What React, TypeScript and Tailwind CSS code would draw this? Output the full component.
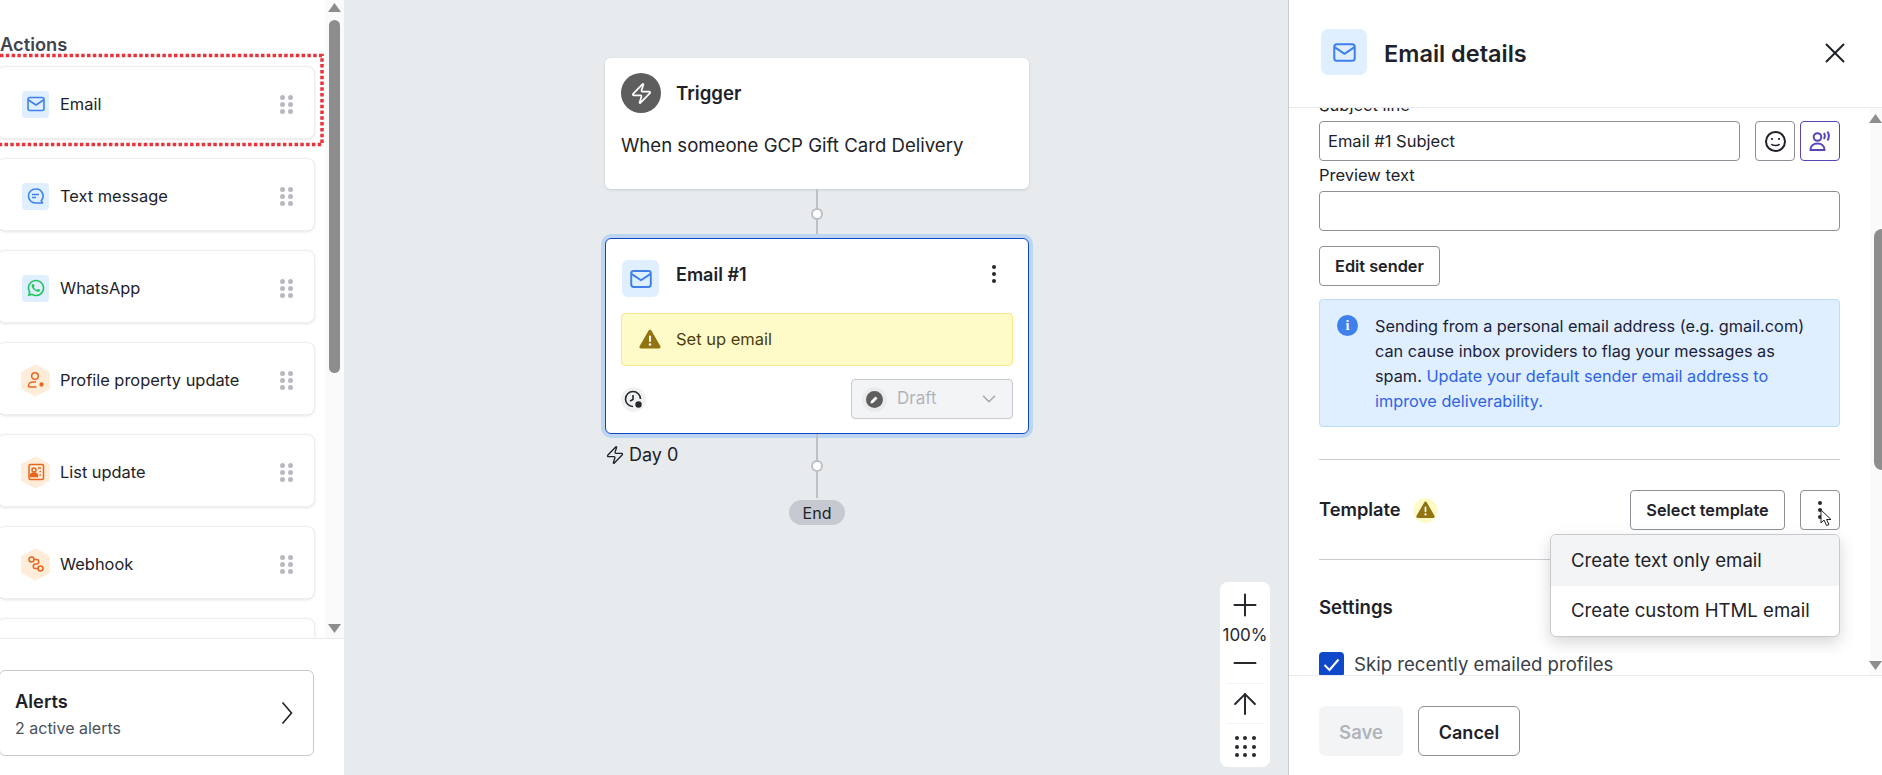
import { ChevronDown, Minus, Plus, ArrowUp, X, Zap } from 'lucide-react';
import { RiWhatsappLine } from 'react-icons/ri';

function MailIcon({ size = 18 }: { size?: number }) {
  return (
    <svg width={size} height={size} viewBox="0 0 18 18" fill="none" stroke="#3f80ea" strokeWidth="1.6">
      <rect x="1" y="2.5" width="16" height="13" rx="2" />
      <path d="M1.5 5 9 10l7.500-5" strokeLinejoin="round" />
    </svg>
  );
}

function Hexagon({ children }: { children: React.ReactNode }) {
  return (
    <div className="relative -ml-[2px] mr-[-2px] flex h-[33px] w-[31px] items-center justify-center">
      <svg className="absolute inset-0" width="31" height="33" viewBox="0 0 31 33">
        <polygon points="15.5,2 28.500,9 28.500,24 15.5,31 2.500,24 2.500,9" fill="#ffecd9" stroke="#ffecd9" strokeWidth="3" strokeLinejoin="round" />
      </svg>
      <svg className="relative" width="18" height="18" viewBox="0 0 18 18" fill="none" stroke="#e5671f" strokeWidth="1.5">
        {children}
      </svg>
    </div>
  );
}

function SquareIcon({ children }: { children: React.ReactNode }) {
  return <div className="flex h-[27px] w-[27px] items-center justify-center rounded-[4px] bg-[#dfefff]">{children}</div>;
}

function Grip() {
  return (
    <div className="grid grid-cols-2 gap-x-[3px] gap-y-[2px]">
      {[0, 1, 2, 3, 4, 5].map((i) => (
        <span key={i} className="h-[5px] w-[5px] rounded-full bg-[#b6bac0]" />
      ))}
    </div>
  );
}

const actions = [
  { label: 'Email', icon: <SquareIcon><MailIcon /></SquareIcon> },
  {
    label: 'Text message',
    icon: (
      <SquareIcon>
        <svg width="19" height="19" viewBox="0 0 19 19" fill="none" stroke="#3f80ea" strokeWidth="1.6">
          <path d="M9.500 2a7 7 0 1 0 0 14h7l-1.300-2.300A7 7 0 0 0 9.500 2Z" strokeLinejoin="round" />
          <path d="M6 7.500h7M6 10.500h4" />
        </svg>
      </SquareIcon>
    ),
  },
  {
    label: 'WhatsApp',
    icon: <SquareIcon><RiWhatsappLine size={20} color="#22c55e" /></SquareIcon>,
  },
  {
    label: 'Profile property update',
    icon: (
      <Hexagon>
        <circle cx="8" cy="5" r="3.300" />
        <path d="M1.500 16v-1.500c0-2 2-3.500 4.500-3.500h3" />
        <path d="M1.500 16h8" />
        <circle cx="14.500" cy="13.500" r="1.400" fill="#e5671f" />
      </Hexagon>
    ),
  },
  {
    label: 'List update',
    icon: (
      <Hexagon>
        <rect x="2" y="1.500" width="14.500" height="15" rx="1.500" />
        <circle cx="7" cy="7" r="2" />
        <path d="M3.500 13c0-2 1.500-3 3.500-3s3.500 1 3.500 3v.5h-7Z" fill="#e5671f" />
        <path d="M11 5h3M12.500 8.500H14M12.500 12H14" />
      </Hexagon>
    ),
  },
  {
    label: 'Webhook',
    icon: (
      <Hexagon>
        <circle cx="4.500" cy="4.500" r="2.500" />
        <circle cx="13.500" cy="13.500" r="2.500" />
        <path d="M7 4.500h2.500a2.200 2.200 0 0 1 0 4.500h-1a2.200 2.200 0 0 0 0 4.500H11" />
      </Hexagon>
    ),
  },
];

function ActionCard({ label, icon }: { label?: string; icon?: React.ReactNode }) {
  return (
    <div className="flex h-[73px] w-[318px] shrink-0 items-center rounded-[8px] border border-[#eceef0] bg-white pl-[24px] pr-[21px] pt-[3px] shadow-[0_1px_3px_rgba(0,0,0,0.1)]">
      {icon}
      <span className="ml-[11px] flex-1 text-[16.4px] text-[#1e2228]">{label}</span>
      {label && <Grip />}
    </div>
  );
}

function ScrollArrow({ down }: { down?: boolean }) {
  return (
    <svg width="13" height="9" viewBox="0 0 13 9" className="shrink-0">
      <polygon points={down ? '0,0 13,0 6.500,9' : '6.500,0 13,9 0,9'} fill="#8d8d8d" />
    </svg>
  );
}

function Sidebar() {
  return (
    <aside className="relative flex h-full w-[345px] shrink-0 flex-col border-r border-[#e6e8ea] bg-white">
      <div className="flex h-[639px] shrink-0 border-b border-[#e8eaec]">
        <div className="w-[325px] overflow-hidden">
          <h2 className="pt-[33px] text-[18.3px] leading-[22px] font-semibold text-[#3f454c]">Actions</h2>
          <div className="-ml-[3px] mt-[11px] flex flex-col gap-[19px]">
            {actions.map((a) => (
              <ActionCard key={a.label} label={a.label} icon={a.icon} />
            ))}
            <ActionCard />
          </div>
        </div>
        <div className="flex flex-1 flex-col items-center justify-between bg-[#fafafa] pb-[5px] pt-[3px] pr-px">
          <ScrollArrow />
          <div className="absolute left-[329px] top-[20px] h-[353px] w-[11px] rounded-full bg-[#8d8d8d]" />
          <ScrollArrow down />
        </div>
      </div>
      <div className="-ml-px mt-[31px] flex h-[86px] w-[315px] items-center justify-between rounded-[6px] border border-[#c6c9ce] pl-[15px] pr-[20px]">
        <div>
          <div className="pt-[1px] text-[18.3px] leading-[26px] font-semibold text-[#1e2228]">Alerts</div>
          <div className="mt-[2px] text-[16px] leading-[24px] text-[#4b5159]">2 active alerts</div>
        </div>
        <svg width="12" height="24" viewBox="0 0 12 24" fill="none" stroke="#1e2228" strokeWidth="1.6">
          <path d="M1.500 1.500 10.500 12l-9 10.500" />
        </svg>
      </div>
      {/* dotted highlight round the first card */}
      <svg className="absolute left-0 top-[53px]" width="325" height="95" viewBox="0 0 325 95" fill="none">
        <path d="M0 2.500H322V91.500H0" stroke="#e8343c" strokeWidth="3.500" strokeDasharray="3.500 2.300" />
      </svg>
    </aside>
  );
}

function Connector({ height }: { height: number }) {
  return (
    <div className="relative flex w-full shrink-0 justify-center" style={{ height }}>
      <div className="h-full w-[2px] bg-[#bcc0c5]" />
      <div className="absolute left-1/2 top-1/2 h-[12px] w-[12px] -translate-x-1/2 -translate-y-1/2 rounded-full border-2 border-[#bcc0c5] bg-white" />
    </div>
  );
}

function ZoomControls() {
  return (
    <div className="absolute bottom-[8px] right-[18px] flex h-[185px] w-[50px] flex-col items-center rounded-[8px] bg-white pt-[10px] text-[#26282c]">
      <div className="flex h-[26px] items-center justify-center">
        <Plus size={36} strokeWidth={1.35} className="shrink-0" />
      </div>
      <div className="mt-[7px] text-[17px] leading-[20px]">100%</div>
      <div className="mt-[5px] flex h-[26px] items-center justify-center">
        <Minus size={36} strokeWidth={1.35} className="shrink-0" />
      </div>
      <div className="mt-[7px] h-px w-[36px] bg-[#f3f4f5]" />
      <div className="mt-[7px] flex h-[26px] items-center justify-center">
        <ArrowUp size={34} strokeWidth={1.4} className="shrink-0" />
      </div>
      <div className="mt-[6px] h-px w-[36px] bg-[#f3f4f5]" />
      <div className="mt-[12px] grid grid-cols-3 gap-x-[4.500px] gap-y-[4.500px]">
        {[0, 1, 2, 3, 4, 5, 6, 7, 8].map((i) => (
          <span key={i} className="h-[4px] w-[4px] rounded-full bg-[#26282c]" />
        ))}
      </div>
    </div>
  );
}

function Canvas() {
  return (
    <main className="relative flex h-full flex-1 flex-col items-center bg-[#e8ebee] pl-px pt-[58px]">
      <div className="h-[131px] w-[424px] shrink-0 rounded-[6px] bg-white px-[16px] pt-[15px] shadow-[0_1px_3px_rgba(0,0,0,0.12)]">
        <div className="flex items-center gap-[15px]">
          <div className="flex h-[40px] w-[40px] items-center justify-center rounded-full bg-[#5e5e5e]">
            <Zap size={23} color="white" strokeWidth={1.8} />
          </div>
          <span className="pt-[1px] text-[18.6px] font-semibold text-[#1e2228]">Trigger</span>
        </div>
        <p className="mt-[19px] text-[18.6px] leading-[26px] text-[#1e2228]">When someone GCP Gift Card Delivery</p>
      </div>
      <Connector height={49} />
      <div className="relative h-[196px] w-[424px] shrink-0 rounded-[6px] border border-[#0f49c0] bg-white px-[15px] pt-[21px] shadow-[0_0_0_4px_#bcd6f2]">
        <div className="flex h-[37px] items-center">
          <div className="ml-[1px] flex h-[37px] w-[37px] items-center justify-center rounded-[6px] bg-[#dfefff]">
            <MailIcon size={22} />
          </div>
          <span className="ml-[17px] flex-1 -translate-y-[4px] text-[18px] font-semibold text-[#1e2228]">Email #1</span>
          <div className="mr-[17px] flex -translate-y-[5px] flex-col gap-[3px]">
            <span className="h-[4px] w-[4px] rounded-full bg-[#26282c]" />
            <span className="h-[4px] w-[4px] rounded-full bg-[#26282c]" />
            <span className="h-[4px] w-[4px] rounded-full bg-[#26282c]" />
          </div>
        </div>
        <div className="mt-[16px] flex h-[53px] items-center rounded-[4px] border border-[#fce58a] bg-[#fffbc8] pl-[17px]">
          <WarnIcon />
          <span className="ml-[15px] text-[16.5px] text-[#4c3d0c]">Set up email</span>
        </div>
        <div className="mt-[13px] flex items-center justify-between">
          <div className="mt-[1px] flex h-[25px] w-[25px] items-center justify-center rounded-full bg-[#f0f1f3]">
            <svg width="19" height="19" viewBox="0 0 19 19" fill="none" stroke="#26282c" strokeWidth="1.6">
              <path d="M9 16.500A7.500 7.500 0 1 1 16.500 9" />
              <path d="M9 5v4.500l-3 1.500" />
              <circle cx="14.500" cy="14.500" r="3.200" fill="#26282c" stroke="none" />
            </svg>
          </div>
          <div className="flex h-[40px] w-[162px] items-center rounded-[4px] border border-[#c6c9ce] bg-[#f2f4f6] pl-[10px] pr-[12px]">
            <div className="flex h-[25px] w-[25px] items-center justify-center rounded-full bg-[#e9ebed]">
              <div className="flex h-[17px] w-[17px] items-center justify-center rounded-full bg-[#5e5e5e]">
                <svg width="9" height="9" viewBox="0 0 9 9"><path d="M0.500 8.500 1 6l4.500-4.500 2 2L3 8Z" fill="white" /></svg>
              </div>
            </div>
            <span className="ml-[10px] flex-1 text-[17px] text-[#b0b4ba]">Draft</span>
            <ChevronDown size={22} strokeWidth={1.7} className="text-[#a6aab0]" />
          </div>
        </div>
        <div className="absolute -left-[1px] top-[204px] flex items-center gap-[4px] text-[18px] leading-[24px] text-[#1e2228]">
          <Zap size={20} strokeWidth={1.6} />
          Day 0
        </div>
      </div>
      <Connector height={64} />
      <div className="mt-[2px] flex h-[25px] w-[56px] items-center justify-center rounded-full bg-[#c6c9cf] text-[16px] text-[#1e2228]">End</div>
      <ZoomControls />
    </main>
  );
}

function WarnIcon({ size = 22 }: { size?: number }) {
  return (
    <svg width={size} height={size * 0.91} viewBox="0 0 22 20">
      <path d="M9.600 1.500a1.600 1.600 0 0 1 2.800 0l9 15.700a1.600 1.600 0 0 1-1.400 2.400H2a1.600 1.600 0 0 1-1.400-2.400Z" fill="#927211" />
      <rect x="10" y="6.500" width="2" height="6.500" rx="1" fill="white" />
      <circle cx="11" cy="15.500" r="1.300" fill="white" />
    </svg>
  );
}

const outlineBtn = 'flex h-[40px] items-center justify-center rounded-[4px] border border-[#8d9096] bg-white text-[16.3px] font-semibold text-[#1e2228]';

function DetailsPanel() {
  return (
    <section className="flex h-full w-[594px] shrink-0 flex-col border-l border-[#c9cdd2] bg-white">
      <header className="flex h-[108px] shrink-0 items-start border-b border-[#e8eaec] pl-[32px] pr-[30px] pt-[29px]">
        <div className="flex h-[46px] w-[46px] items-center justify-center rounded-[7px] bg-[#dfefff]">
          <MailIcon size={23} />
        </div>
        <h1 className="ml-[17px] flex-1 text-[23.5px] leading-[50px] font-semibold text-[#1e2228]">Email details</h1>
        <X size={34} strokeWidth={1.4} className="mt-[7px] text-[#1e2228]" />
      </header>
      <div className="relative flex min-h-0 flex-1">
        <div className="min-w-0 flex-1 overflow-hidden pl-[30px] pr-[30px]">
          <div className="-mt-[13px] h-[20px] text-[16.5px] leading-[20px] text-[#1e2228]">Subject line</div>
          <div className="mt-[6px] flex gap-[5px]">
            <div className="mr-[10px] flex h-[40px] flex-1 items-center rounded-[4px] border border-[#8d9096] pl-[8px] text-[16.5px] text-[#1e2228]">Email #1 Subject</div>
            <div className="flex h-[40px] w-[40px] items-center justify-center rounded-[4px] border border-[#8d9096]">
              <svg width="23" height="23" viewBox="0 0 23 23" fill="none" stroke="#1e2228" strokeWidth="2">
                <circle cx="11.500" cy="11.500" r="9.500" />
                <circle cx="8" cy="9" r="1.100" fill="#1e2228" stroke="none" />
                <circle cx="15" cy="9" r="1.100" fill="#1e2228" stroke="none" />
                <path d="M7.500 14c1 2 7 2 8 0" strokeWidth="1.600" />
              </svg>
            </div>
            <div className="flex h-[40px] w-[40px] items-center justify-center rounded-[4px] border border-[#5a45b8]">
              <svg width="24" height="24" viewBox="0 0 24 24" fill="none" stroke="#5a45b8" strokeWidth="2">
                <circle cx="9.500" cy="8" r="3.800" />
                <path d="M2.500 21c0-4 3-6.500 7-6.500s7 2.500 7 6.500Z" />
                <path d="M16 4c1 1.500 1 4 0 6M19.500 2.500c1.500 2.500 1.500 6.500 0 9" />
              </svg>
            </div>
          </div>
          <div className="mt-[4px] h-[20px] text-[16.5px] leading-[20px] text-[#1e2228]">Preview text</div>
          <div className="mt-[6px] h-[40px] rounded-[4px] border border-[#8d9096]" />
          <button className={`${outlineBtn} mt-[15px] w-[121px] pt-px`}>Edit sender</button>
          <div className="mt-[13px] flex h-[128px] rounded-[4px] border border-[#bedcfb] bg-[#dfefff] pl-[17px] pt-[14px]">
            <div className="mt-[1px] flex h-[21px] w-[21px] shrink-0 items-center justify-center rounded-full bg-[#3f80ea] font-serif text-[13px] font-bold text-white">i</div>
            <p className="ml-[17px] w-[445px] text-[16.3px] leading-[25px] text-[#1a2238]">
              Sending from a personal email address (e.g. gmail.com) can cause inbox providers to flag your messages as spam.{' '}
              <span className="text-[#2f62e8]">Update your default sender email address to improve deliverability.</span>
            </p>
          </div>
          <div className="mt-[32px] h-px bg-[#c9cdd2]" />
          <div className="relative mt-[30px] flex h-[40px] items-center">
            <span className="text-[18.3px] font-semibold text-[#1e2228]">Template</span>
            <div className="ml-[12px] flex h-[25px] w-[25px] items-center justify-center rounded-full bg-[#fffbc8]">
              <WarnIcon size={19} />
            </div>
            <button className={`${outlineBtn} ml-auto w-[155px] pt-px`}>Select template</button>
            <div className={`${outlineBtn} ml-[15px] w-[40px] flex-col gap-[3px]`}>
              <span className="h-[4px] w-[4px] rounded-full bg-[#26282c]" />
              <span className="h-[4px] w-[4px] rounded-full bg-[#26282c]" />
              <span className="h-[4px] w-[4px] rounded-full bg-[#26282c]" />
            </div>
            {/* open menu */}
            <div className="absolute right-0 top-[44px] z-10 w-[290px] overflow-hidden rounded-[6px] border border-[#c6c9ce] bg-white text-[18.6px] text-[#1e2228] shadow-[0_6px_16px_rgba(0,0,0,0.16)]">
              <div className="flex h-[51px] items-center bg-[#f2f4f6] pl-[20px]">Create text only email</div>
              <div className="flex h-[50px] items-center pl-[20px]">Create custom HTML email</div>
            </div>
            {/* mouse pointer */}
            <svg className="absolute right-[7px] top-[19px] z-20" width="13" height="18" viewBox="0 0 13 18">
              <path d="M1 1v13l3-3 2.500 5.500 2.500-1L6.500 10.500H11Z" fill="white" stroke="#1e2228" strokeWidth="1" strokeLinejoin="round" />
            </svg>
          </div>
          <div className="mt-[29px] h-px bg-[#c9cdd2]" />
          <div className="mt-[37px] text-[18.6px] leading-[20px] font-semibold text-[#1e2228]">Settings</div>
          <div className="mt-[35px] flex items-start gap-[10px]">
            <div className="flex h-[25px] w-[25px] shrink-0 items-center justify-center rounded-[4px] bg-[#0f49c9]">
              <svg width="17" height="14" viewBox="0 0 17 14" fill="none" stroke="white" strokeWidth="2"><path d="m1.500 7 5 5L15.500 1.500" /></svg>
            </div>
            <span className="text-[18.6px] leading-[25px] text-[#3a3f46]">Skip recently emailed profiles</span>
          </div>
        </div>
        <div className="relative flex w-[12px] shrink-0 flex-col items-end justify-between bg-[#fafafa] pb-[5px] pt-[6px]">
          <ScrollArrow />
          <div className="absolute right-0 top-[121px] h-[241px] w-[8px] rounded-l-full bg-[#8d8d8d]" />
          <ScrollArrow down />
        </div>
      </div>
      <footer className="flex h-[100px] shrink-0 gap-[15px] border-t border-[#e8eaec] pl-[30px] pt-[30px]">
        <button className="h-[50px] w-[84px] rounded-[6px] bg-[#f2f4f6] pt-[3px] text-[18.5px] font-semibold text-[#b0b4ba]">Save</button>
        <button className="h-[50px] w-[102px] rounded-[6px] border border-[#8d9096] pt-[3px] text-[18px] font-semibold text-[#1e2228]">Cancel</button>
      </footer>
    </section>
  );
}

export default function App() {
  return (
    <div className="flex h-screen w-full overflow-hidden bg-white font-['Inter',sans-serif]">
      <Sidebar />
      <Canvas />
      <DetailsPanel />
    </div>
  );
}
